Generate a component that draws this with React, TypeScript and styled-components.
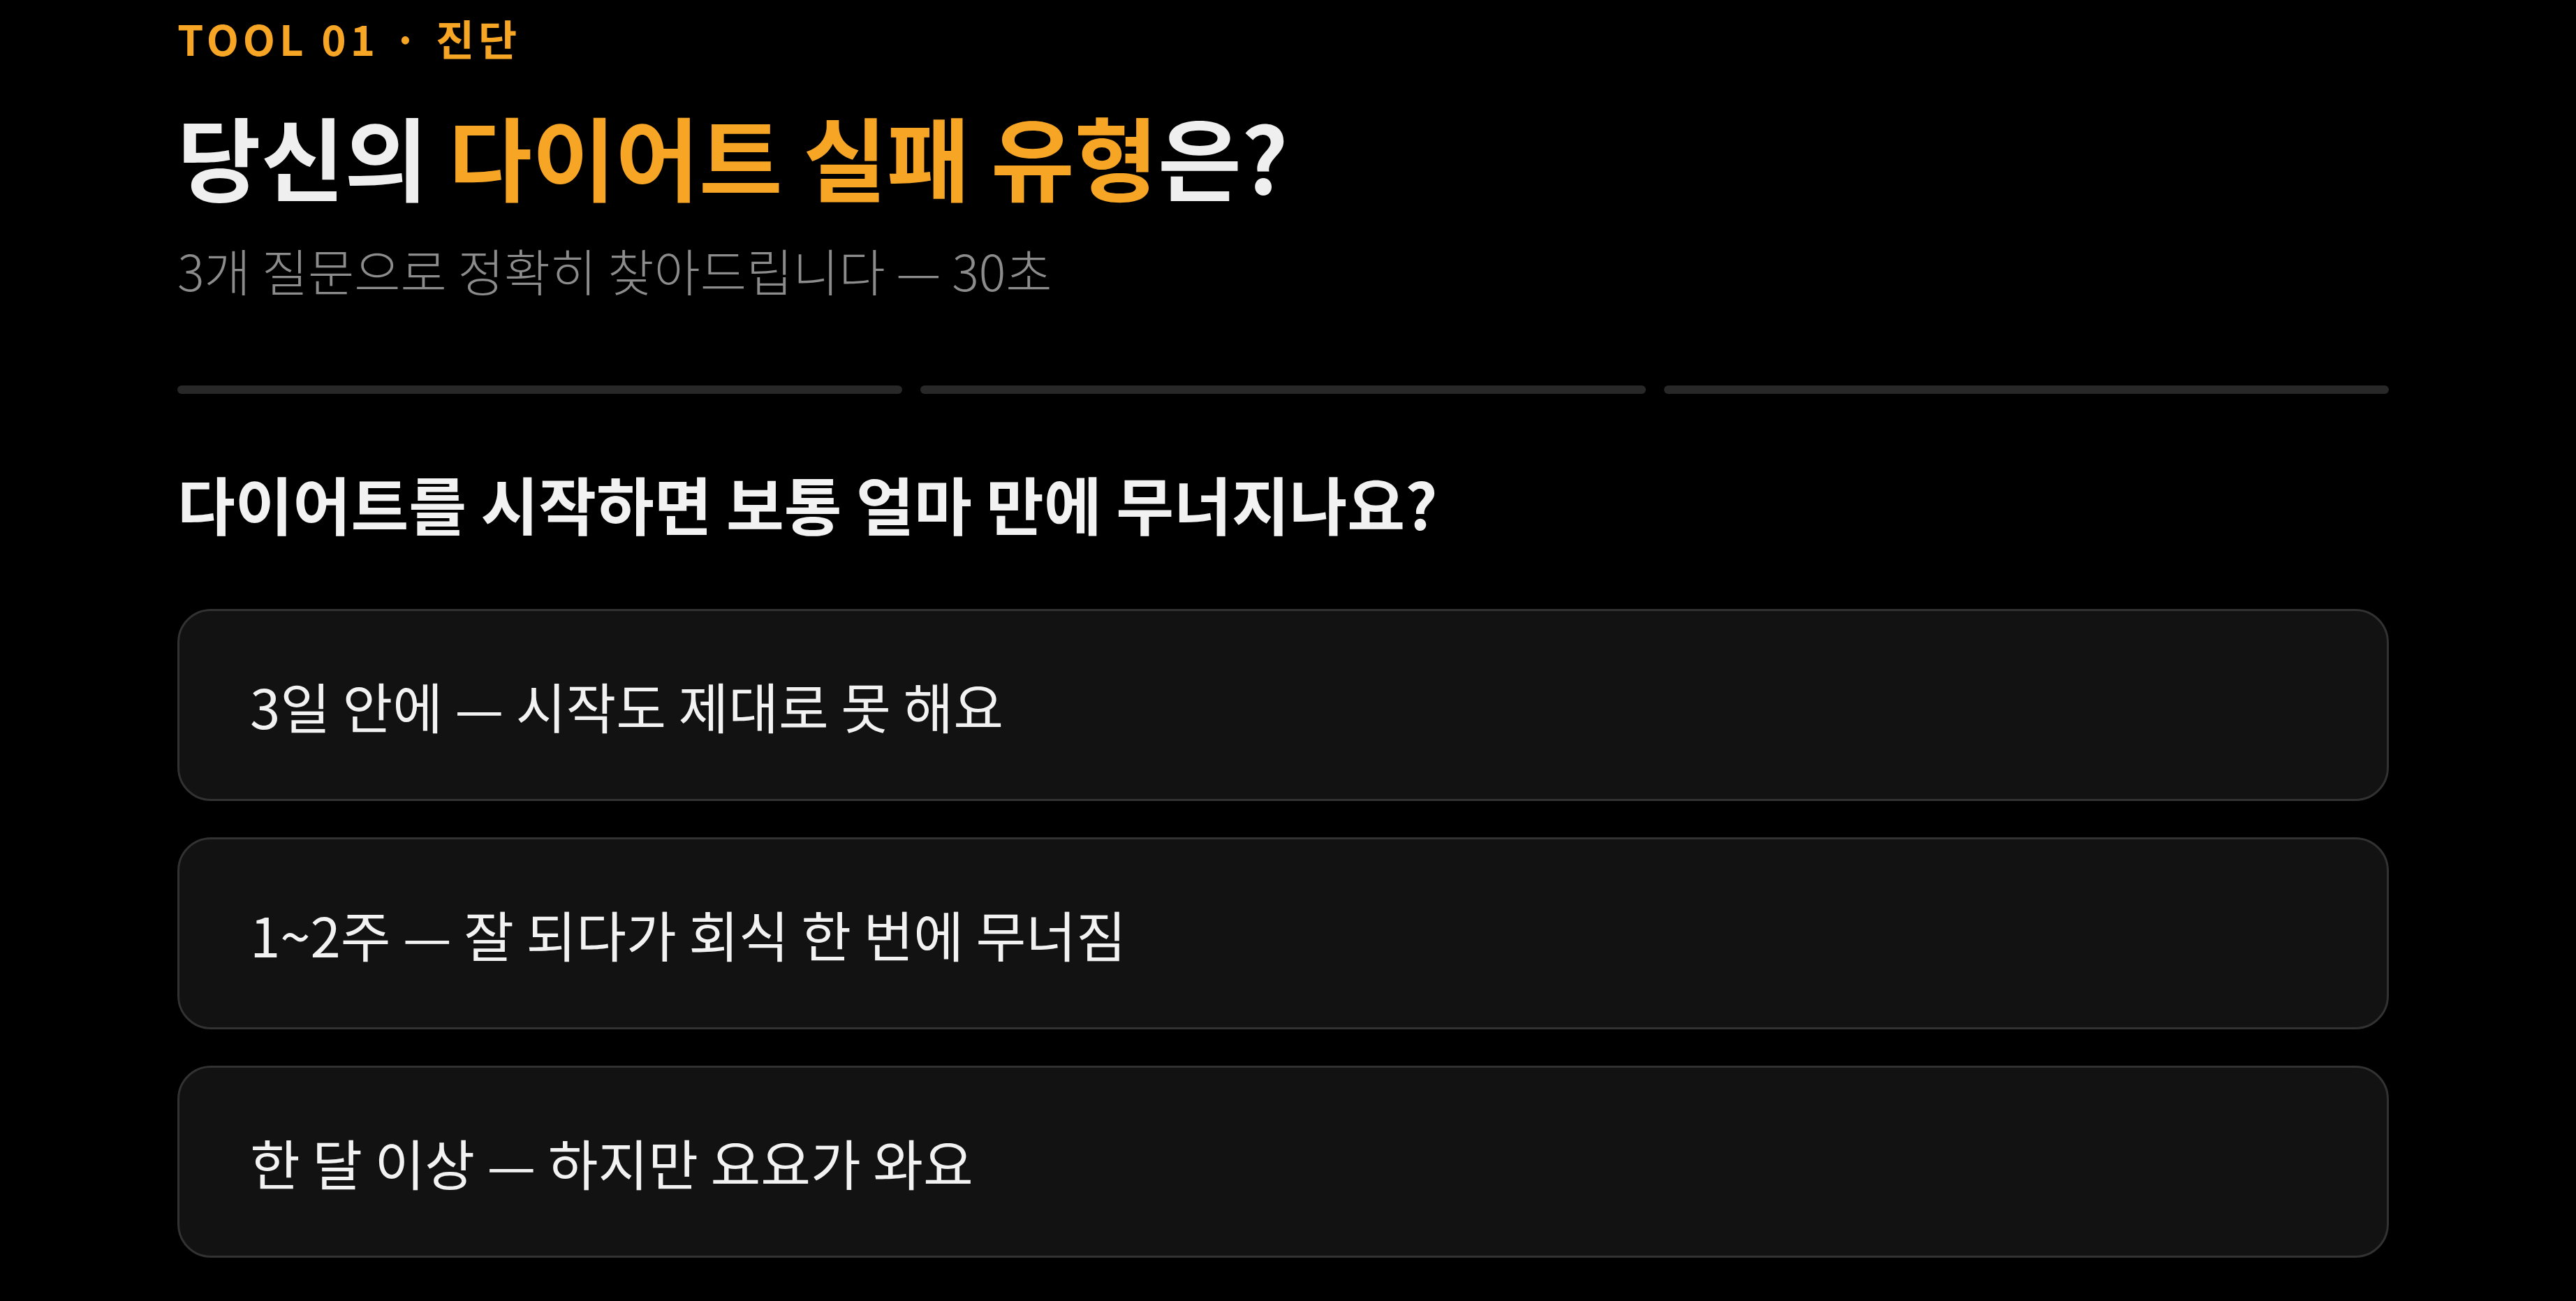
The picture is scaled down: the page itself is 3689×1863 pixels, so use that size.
import React from "react";
import styled, { createGlobalStyle } from "styled-components";

const GlobalStyle = createGlobalStyle`
  html, body {
    margin: 0;
    padding: 0;
    background: #000;
  }
  body {
    font-family: "Noto Sans CJK KR", "Noto Sans", sans-serif;
    color: #efefef;
  }
`;

const options = [
  "3일 안에 — 시작도 제대로 못 해요",
  "1~2주 — 잘 되다가 회식 한 번에 무너짐",
  "한 달 이상 — 하지만 요요가 와요",
];

const App: React.FC = () => {
  const step = 0;

  return (
    <>
      <GlobalStyle />
      <Page>
        <Eyebrow>TOOL 01 · 진단</Eyebrow>
        <Title>
          당신의 <Accent>다이어트 실패 유형</Accent>은?
        </Title>
        <Subtitle>3개 질문으로 정확히 찾아드립니다 — 30초</Subtitle>

        <Progress>
          {[0, 1, 2].map((i) => (
            <ProgressBar key={i} $active={i < step} />
          ))}
        </Progress>

        <Question>다이어트를 시작하면 보통 얼마 만에 무너지나요?</Question>

        <OptionList>
          {options.map((text) => (
            <OptionButton key={text}>{text}</OptionButton>
          ))}
        </OptionList>
      </Page>
    </>
  );
};

export default App;

const Page = styled.main`
  padding: 18px 268px 60px 254px;
`;

const Eyebrow = styled.div`
  font-size: 60px;
  line-height: 72px;
  font-weight: 700;
  letter-spacing: 0.1em;
  color: #f7a525;
`;

const Title = styled.h1`
  margin: 57px 0 0;
  font-size: 130px;
  line-height: 149px;
  font-weight: 700;
  color: #efefef;
`;

const Accent = styled.span`
  color: #f7a525;
`;

const Subtitle = styled.p`
  margin: 48px 0 0;
  font-size: 72px;
  line-height: 84px;
  font-weight: 300;
  color: #8c8c8c;
`;

const Progress = styled.div`
  display: grid;
  grid-template-columns: repeat(3, 1fr);
  gap: 26px;
  margin-top: 124px;
`;

const ProgressBar = styled.div<{ $active: boolean }>`
  height: 12px;
  border-radius: 6px;
  background: ${({ $active }) => ($active ? "#f7a525" : "#282828")};
`;

const Question = styled.h2`
  margin: 108px 0 0;
  font-size: 90px;
  line-height: 96px;
  font-weight: 700;
  color: #f2f2f2;
`;

const OptionList = styled.div`
  display: flex;
  flex-direction: column;
  gap: 52px;
  margin-top: 104px;
`;

const OptionButton = styled.button`
  display: flex;
  align-items: center;
  height: 275px;
  padding: 0 0 0 101px;
  border: 3px solid #323232;
  border-radius: 48px;
  background: #121212;
  color: #f2f2f2;
  font-family: "Noto Sans CJK KR", "Noto Sans", sans-serif;
  font-size: 78px;
  font-weight: 400;
  text-align: left;
  cursor: pointer;
`;
